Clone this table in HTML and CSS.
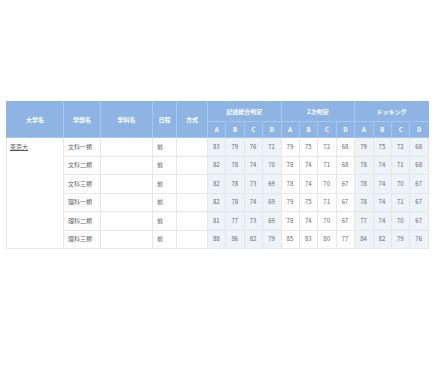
FILE: index.html
```html
<!DOCTYPE html>
<html lang="ja">
<head>
<meta charset="utf-8">
<link rel="stylesheet" href="styles.css">
</head>
<body>
<table class="score">
  <colgroup>
    <col class="c-univ"><col class="c-fac"><col class="c-dep"><col class="c-sch"><col class="c-meth">
    <col span="12" class="c-num">
  </colgroup>
  <thead>
    <tr class="h1">
      <th rowspan="2">大学名</th>
      <th rowspan="2">学部名</th>
      <th rowspan="2">学科名</th>
      <th rowspan="2">日程</th>
      <th rowspan="2">方式</th>
      <th colspan="4">記述総合判定</th>
      <th colspan="4">2次判定</th>
      <th colspan="4">ドッキング</th>
    </tr>
    <tr class="h2">
      <th>A</th><th>B</th><th>C</th><th>D</th>
      <th>A</th><th>B</th><th>C</th><th>D</th>
      <th>A</th><th>B</th><th>C</th><th>D</th>
    </tr>
  </thead>
  <tbody>
    <tr>
      <td rowspan="6" class="univ"><a href="#">東京大</a></td>
      <td>文科一類</td><td></td><td>前</td><td></td>
      <td class="n t">83</td><td class="n t">79</td><td class="n t">76</td><td class="n t">71</td>
      <td class="n">79</td><td class="n">75</td><td class="n">72</td><td class="n">68</td>
      <td class="n t">79</td><td class="n t">75</td><td class="n t">72</td><td class="n t">68</td>
    </tr>
    <tr>
      <td>文科二類</td><td></td><td>前</td><td></td>
      <td class="n t">82</td><td class="n t">78</td><td class="n t">74</td><td class="n t">70</td>
      <td class="n">78</td><td class="n">74</td><td class="n">71</td><td class="n">68</td>
      <td class="n t">78</td><td class="n t">74</td><td class="n t">71</td><td class="n t">68</td>
    </tr>
    <tr>
      <td>文科三類</td><td></td><td>前</td><td></td>
      <td class="n t">82</td><td class="n t">78</td><td class="n t">73</td><td class="n t">69</td>
      <td class="n">78</td><td class="n">74</td><td class="n">70</td><td class="n">67</td>
      <td class="n t">78</td><td class="n t">74</td><td class="n t">70</td><td class="n t">67</td>
    </tr>
    <tr>
      <td>理科一類</td><td></td><td>前</td><td></td>
      <td class="n t">82</td><td class="n t">78</td><td class="n t">74</td><td class="n t">69</td>
      <td class="n">79</td><td class="n">75</td><td class="n">71</td><td class="n">67</td>
      <td class="n t">78</td><td class="n t">74</td><td class="n t">71</td><td class="n t">67</td>
    </tr>
    <tr>
      <td>理科二類</td><td></td><td>前</td><td></td>
      <td class="n t">81</td><td class="n t">77</td><td class="n t">73</td><td class="n t">69</td>
      <td class="n">78</td><td class="n">74</td><td class="n">70</td><td class="n">67</td>
      <td class="n t">77</td><td class="n t">74</td><td class="n t">70</td><td class="n t">67</td>
    </tr>
    <tr>
      <td>理科三類</td><td></td><td>前</td><td></td>
      <td class="n t">88</td><td class="n t">86</td><td class="n t">82</td><td class="n t">79</td>
      <td class="n">85</td><td class="n">83</td><td class="n">80</td><td class="n">77</td>
      <td class="n t">84</td><td class="n t">82</td><td class="n t">79</td><td class="n t">76</td>
    </tr>
  </tbody>
</table>
</body>
</html>
```

FILE: styles.css
```css
html, body {
  margin: 0;
  padding: 0;
  background: #ffffff;
}
body {
  padding: 101px 0 0 6px;
  font-family: "Noto Sans CJK JP", "Noto Sans", sans-serif;
  font-size: 6px;
  color: #666666;
}
.score {
  border-collapse: collapse;
  table-layout: fixed;
  width: 422px;
}
.c-univ { width: 57px; }
.c-fac { width: 37px; }
.c-dep { width: 52px; }
.c-sch { width: 24px; }
.c-meth { width: 31px; }
.c-num { width: 18.4px; }

.score th {
  background: #8eb4e3;
  color: #ffffff;
  font-weight: bold;
  text-align: center;
  vertical-align: middle;
  border: 1px solid #a9c7ec;
  padding: 0;
  line-height: 1;
}
.score tr.h1 { height: 20px; }
.score tr.h2 { height: 16px; }
.score thead tr.h1 th:first-child { border-left-color: #8eb4e3; }
.score thead th:last-child { border-right-color: #8eb4e3; }
.score thead tr.h1 th { border-top-color: #8eb4e3; }

.score td {
  border: 1px solid #e6e6e6;
  padding: 0 0 0 4px;
  height: 17.5px;
  vertical-align: middle;
  text-align: left;
  line-height: 1;
  white-space: nowrap;
}
.score td.n { padding-left: 5px; }
.score td.t { background: #eef3fa; }
.score td.univ {
  vertical-align: top;
  padding: 6px 0 0 3px;
}
.score td.univ a {
  color: #555555;
  text-decoration: underline;
}
```
